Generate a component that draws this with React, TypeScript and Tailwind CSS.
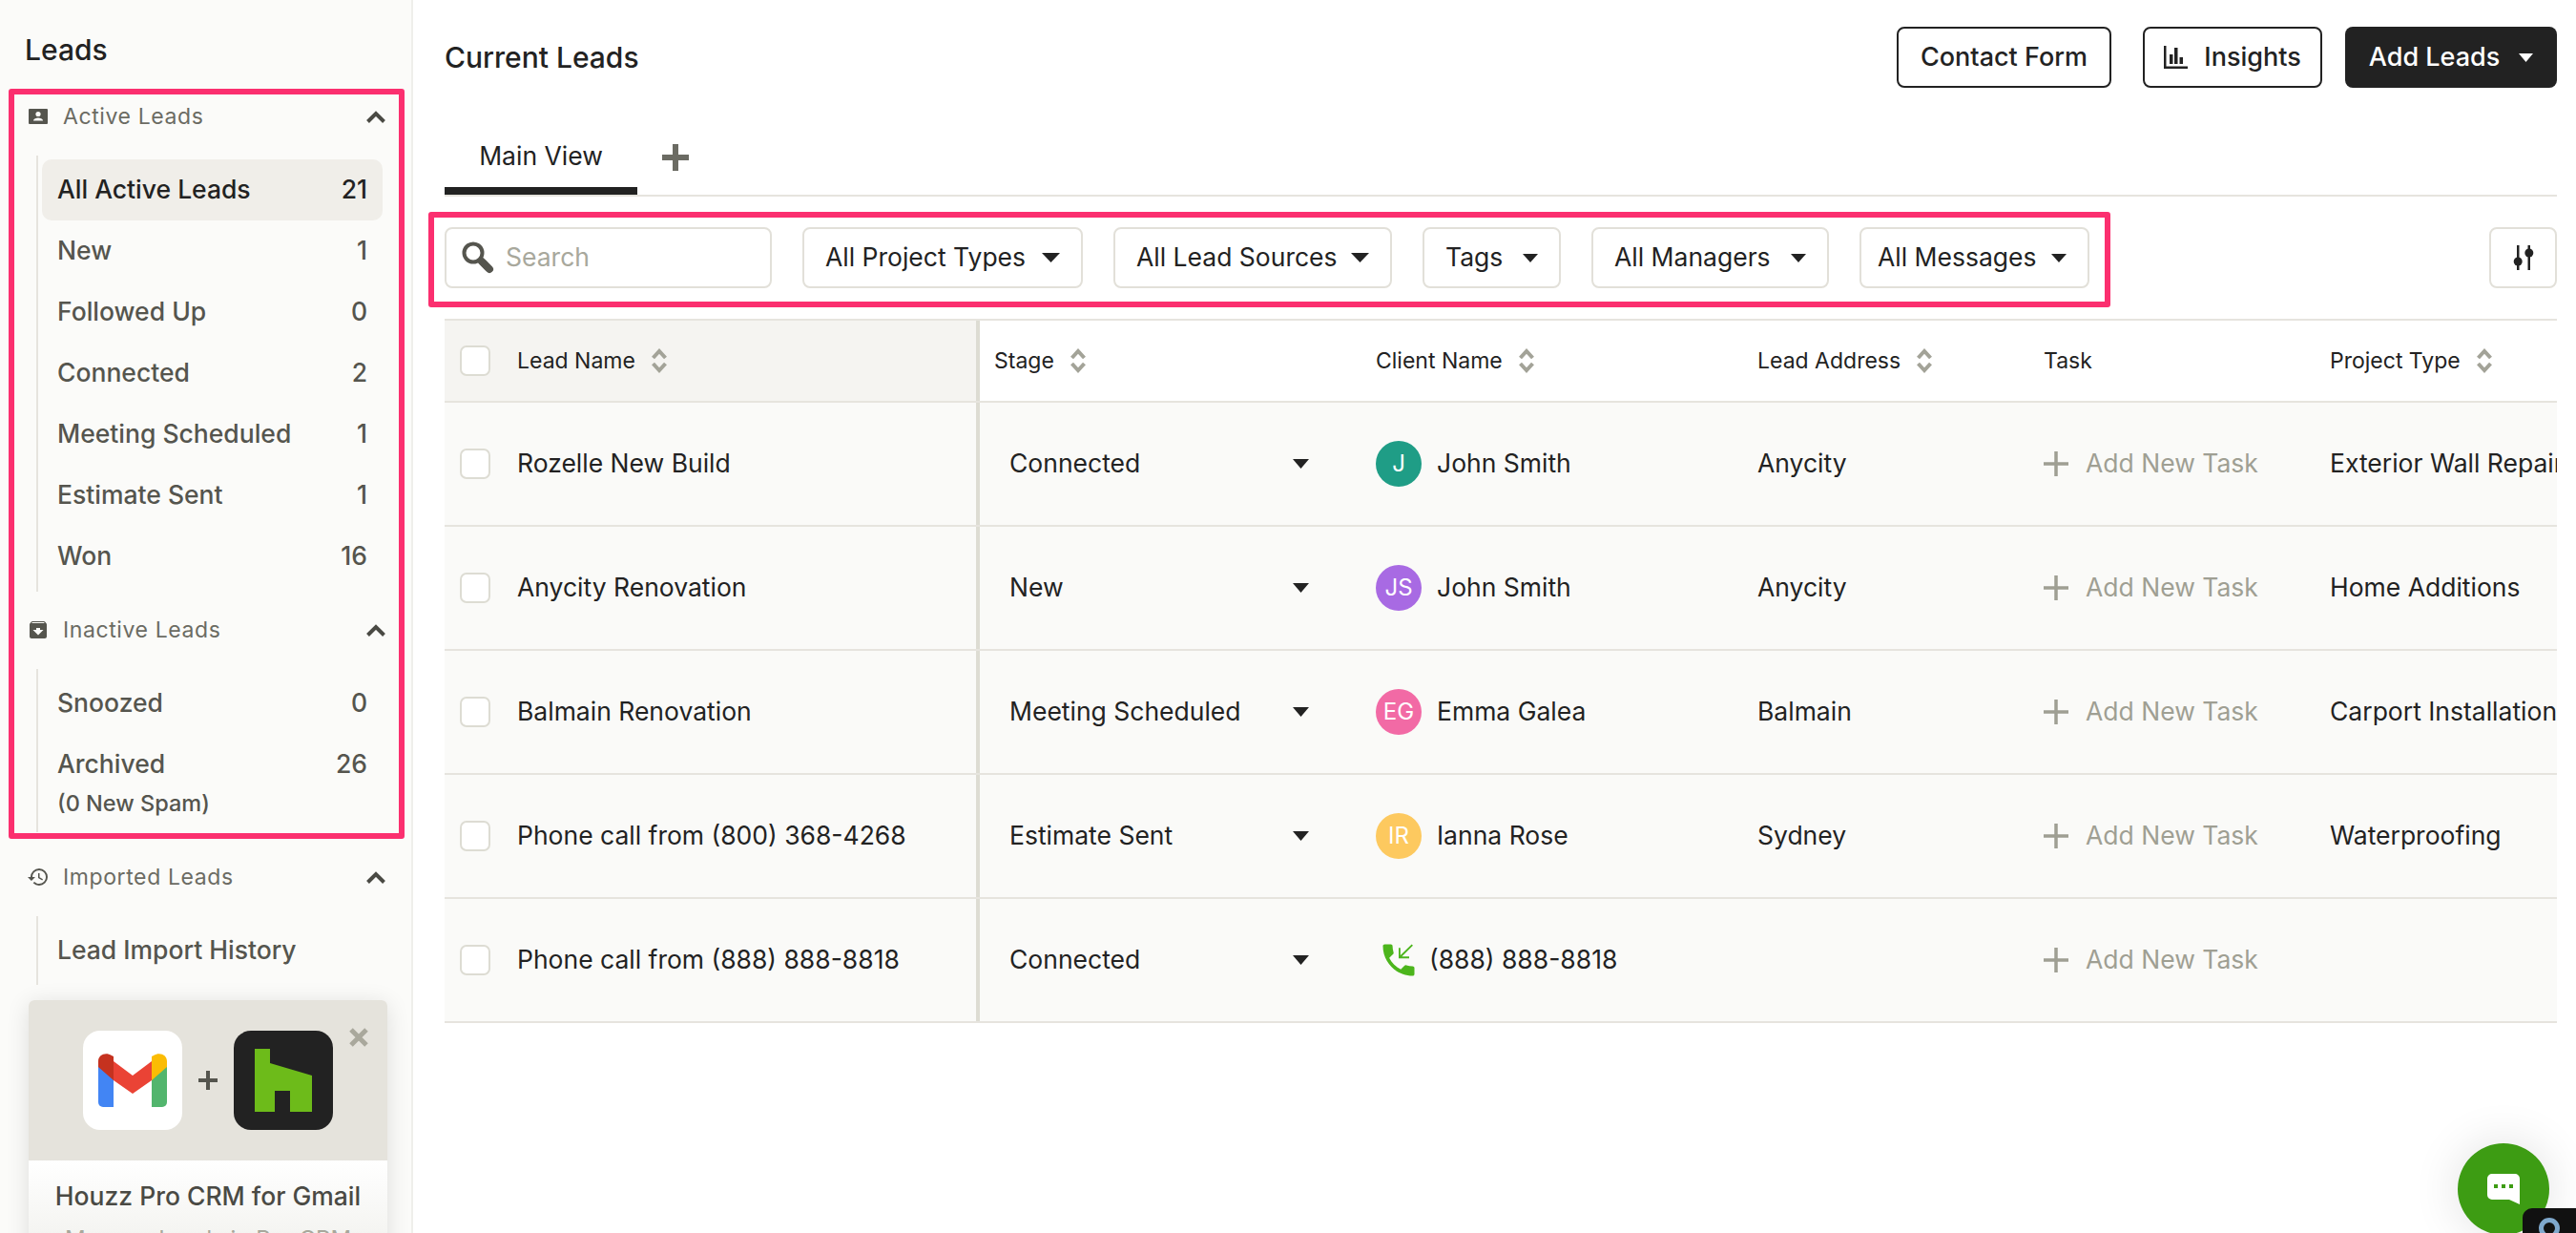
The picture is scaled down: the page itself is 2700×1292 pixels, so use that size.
import { MdArchive, MdHistory, MdPhoneCallback } from "react-icons/md";

const font = "[font-family:Inter,'Liberation_Sans',sans-serif]";

const activeItems = [
  { label: "All Active Leads", count: 21, selected: true },
  { label: "New", count: 1 },
  { label: "Followed Up", count: 0 },
  { label: "Connected", count: 2 },
  { label: "Meeting Scheduled", count: 1 },
  { label: "Estimate Sent", count: 1 },
  { label: "Won", count: 16 },
];

const rows = [
  { name: "Rozelle New Build", stage: "Connected", initials: "J", color: "bg-[#1f9d86]", client: "John Smith", address: "Anycity", type: "Exterior Wall Repairs" },
  { name: "Anycity Renovation", stage: "New", initials: "JS", color: "bg-[#a86ae3]", client: "John Smith", address: "Anycity", type: "Home Additions" },
  { name: "Balmain Renovation", stage: "Meeting Scheduled", initials: "EG", color: "bg-[#f26aa5]", client: "Emma Galea", address: "Balmain", type: "Carport Installation" },
  { name: "Phone call from (800) 368-4268", stage: "Estimate Sent", initials: "IR", color: "bg-[#fdc95f]", client: "Ianna Rose", address: "Sydney", type: "Waterproofing" },
  { name: "Phone call from (888) 888-8818", stage: "Connected", initials: "", color: "", client: "(888) 888-8818", address: "", type: "" },
];

function Caret({ className = "" }: { className?: string }) {
  return (
    <svg viewBox="0 0 18 10" preserveAspectRatio="none" className={`shrink-0 ${className}`}>
      <path d="M0 0h18L9 10z" fill="currentColor" />
    </svg>
  );
}

function SortIcon() {
  return (
    <svg width="18" height="28" viewBox="0 0 18 28" className="text-[#a3a398]" fill="none" stroke="currentColor" strokeWidth="4">
      <path d="M2.500 11 9 4l6.500 7M2.500 17 9 24l6.500-7" />
    </svg>
  );
}

function SectionHeader({ icon, title }: { icon: React.ReactNode; title: string }) {
  return (
    <div className="flex h-[40px] items-center pl-[30px] pr-[27px]">
      <span className="flex w-[36px] text-[#55554e]">{icon}</span>
      <span className="flex-1 text-[23px] tracking-[0.6px] text-[#6b6b63]">{title}</span>
      <svg width="20" height="13" viewBox="0 0 20 13" fill="none" stroke="#4a4a44" strokeWidth="4">
        <path d="M1.500 11.500 10 3l8.500 8.500" />
      </svg>
    </div>
  );
}

function NavItem({ label, count, selected }: { label: string; count?: number; selected?: boolean }) {
  return (
    <div
      className={`flex h-[64px] items-center justify-between rounded-[10px] pl-[16px] pr-[16px] text-[26.5px] font-medium ${
        selected ? "bg-[#f0eee9] text-[#222]" : "text-[#55554e]"
      }`}
    >
      <span>{label}</span>
      <span>{count}</span>
    </div>
  );
}

function Sidebar() {
  return (
    <aside className="flex h-full w-[433px] shrink-0 flex-col overflow-hidden border-r-2 border-[#efefeb] bg-[#fbfbf9]">
      <h2 className="pl-[26px] pt-[32px] text-[30px] font-medium leading-[40px] text-[#222]">Leads</h2>
      <div className="mt-[30px]">
        <SectionHeader
          title="Active Leads"
          icon={
            <svg width="20" height="16" viewBox="0 0 20 16">
              <path fill="#55554e" d="M1 0h18a1 1 0 0 1 1 1v14a1 1 0 0 1-1 1H1a1 1 0 0 1-1-1V1a1 1 0 0 1 1-1z" />
              <circle cx="10" cy="5.500" r="2.600" fill="#fbfbf9" />
              <path fill="#fbfbf9" d="M5 12.500c0-2 3-3 5-3s5 1 5 3z" />
            </svg>
          }
        />
        <div className="ml-[38px] mr-[30px] mt-[21px] border-l-2 border-[#e6e4de] pb-[5px] pl-[4px] pt-[4px]">
          {activeItems.map((item) => (
            <NavItem key={item.label} {...item} />
          ))}
        </div>
      </div>
      <div className="mt-[20px]">
        <SectionHeader title="Inactive Leads" icon={<MdArchive size={24} className="-ml-[2px]" />} />
        <div className="ml-[38px] mr-[30px] mt-[21px] border-l-2 border-[#e6e4de] pb-[18px] pl-[4px] pt-[4px]">
          <NavItem label="Snoozed" count={0} />
          <NavItem label="Archived" count={26} />
          <div className="-mt-[3px] pl-[16px] text-[23.5px] font-medium leading-[24px] text-[#55554e]">(0 New Spam)</div>
        </div>
      </div>
      <div className="mt-[27px]">
        <SectionHeader title="Imported Leads" icon={<MdHistory size={24} className="-ml-[2px]" />} />
        <div className="ml-[38px] mr-[30px] mt-[21px] border-l-2 border-[#e6e4de] pl-[4px]">
          <div className="flex h-[72px] items-center pl-[16px] text-[26.5px] font-medium text-[#55554e]">Lead Import History</div>
        </div>
      </div>
      <div className="relative ml-[30px] mt-[16px] w-[376px] shrink-0 rounded-t-[6px] bg-white shadow-[0_4px_24px_rgba(0,0,0,0.12)]">
        <div className="flex h-[168px] items-center justify-center gap-[16px] rounded-t-[6px] bg-[#e5e3dc]">
          <div className="flex h-[104px] w-[104px] items-center justify-center rounded-[18px] bg-white">
            <svg width="72" height="56" viewBox="0 0 72 56">
              <path fill="#4285f4" d="M0 14h16v42H5a5 5 0 0 1-5-5z" />
              <path fill="#34a853" fillOpacity="0.85" d="M56 14h16v37a5 5 0 0 1-5 5H56z" />
              <path fill="#ea4335" d="M16 8 36 23 56 8v20L36 42 16 28z" />
              <path fill="#c5321f" d="M0 8c0-7 8-10 14-6l2 1v25L0 14z" />
              <path fill="#fbbc04" d="M72 8c0-7-8-10-14-6l-2 1v25l16-14z" />
            </svg>
          </div>
          <svg width="22" height="22" viewBox="0 0 22 22" className="text-[#55554e]">
            <path d="M11 1v20M1 11h20" stroke="currentColor" strokeWidth="4" />
          </svg>
          <div className="flex h-[104px] w-[104px] items-center justify-center rounded-[18px] bg-[#222]">
            <svg width="60" height="66" viewBox="0 0 60 66">
              <path fill="#6dbb1a" d="M0 0h16v15l44 13v38H37V44H21v22H0z" />
            </svg>
          </div>
        </div>
        <svg width="22" height="22" viewBox="0 0 22 22" className="absolute right-[19px] top-[28px] text-[#a9a89c]">
          <path d="M3 3l16 16M19 3 3 19" stroke="currentColor" strokeWidth="5" />
        </svg>
        <div className="bg-gradient-to-b from-white to-[#f1f1ed] pt-[20px] text-center">
          <div className="text-[26.5px] font-medium leading-[34px] text-[#4a4a44]">Houzz Pro CRM for Gmail</div>
          <div className="mt-[12px] text-[24px] leading-[34px] text-[#a8a89c]">Manage Leads in Pro CRM</div>
        </div>
      </div>
    </aside>
  );
}

function OutlineButton({ children, className = "" }: { children: React.ReactNode; className?: string }) {
  return (
    <button className={`flex h-[64px] items-center justify-center rounded-[8px] border-2 border-[#222] bg-white text-[27px] font-medium text-[#222] ${className}`}>
      {children}
    </button>
  );
}

function FilterSelect({ label, small, className = "" }: { label: string; small?: boolean; className?: string }) {
  return (
    <button className={`flex h-[64px] items-center justify-between rounded-[8px] border-2 border-[#e2e0d9] bg-white pr-[22px] text-[26.5px] text-[#222] ${className}`}>
      <span>{label}</span>
      <Caret className={small ? "h-[9px] w-[16px] text-[#222]" : "h-[10px] w-[19px] text-[#222]"} />
    </button>
  );
}

function Checkbox() {
  return <span className="block h-[32px] w-[32px] rounded-[7px] border-2 border-[#dddcd3] bg-white" />;
}

function HeaderCell({ label, sort = true, className = "" }: { label: string; sort?: boolean; className?: string }) {
  return (
    <div className={`flex items-center gap-[16px] text-[23px] text-[#222] ${className}`}>
      <span className="whitespace-nowrap">{label}</span>
      {sort && <SortIcon />}
    </div>
  );
}

function LeadsTable() {
  return (
    <div className="mt-[32px] w-[2214px] overflow-hidden border-t-2 border-[#e6e4de]">
      <div className="grid h-[86px] grid-cols-[561px_415px_400px_300px_300px_238px] border-b-2 border-[#e6e4de]">
        <div className="flex items-center gap-[28px] border-r-4 border-[#dddcd3] bg-[#f5f4f1] pl-[16px]">
          <Checkbox />
          <HeaderCell label="Lead Name" />
        </div>
        <HeaderCell label="Stage" className="pl-[15px]" />
        <HeaderCell label="Client Name" />
        <HeaderCell label="Lead Address" />
        <HeaderCell label="Task" sort={false} />
        <HeaderCell label="Project Type" />
      </div>
      {rows.map((row) => (
        <div key={row.name} className="grid h-[130px] grid-cols-[561px_415px_400px_300px_300px_238px] border-b-2 border-[#e6e4de] bg-[#fafaf8] text-[26.5px] text-[#222]">
          <div className="flex items-center gap-[28px] border-r-4 border-[#dddcd3] pl-[16px]">
            <Checkbox />
            <span className="whitespace-nowrap">{row.name}</span>
          </div>
          <div className="flex items-center justify-between pl-[31px] pr-[70px]">
            <span className="whitespace-nowrap">{row.stage}</span>
            <Caret className="h-[10px] w-[17px] text-[#222]" />
          </div>
          <div className="flex items-center">
            {row.initials ? (
              <>
                <span className={`flex h-[48px] w-[48px] items-center justify-center rounded-full text-[24px] text-white ${row.color}`}>
                  {row.initials}
                </span>
                <span className="ml-[16px] whitespace-nowrap">{row.client}</span>
              </>
            ) : (
              <>
                <MdPhoneCallback size={44} className="ml-[2px] text-[#4cb51c]" />
                <span className="ml-[10px] whitespace-nowrap">{row.client}</span>
              </>
            )}
          </div>
          <div className="flex items-center">{row.address}</div>
          <div className="flex items-center text-[#9f9f93]">
            <svg width="26" height="26" viewBox="0 0 26 26" className="mr-[18px]">
              <path d="M13 0v26M0 13h26" stroke="currentColor" strokeWidth="3.500" />
            </svg>
            <span className="whitespace-nowrap">Add New Task</span>
          </div>
          <div className="flex items-center overflow-hidden whitespace-nowrap">{row.type}</div>
        </div>
      ))}
    </div>
  );
}

function Main() {
  return (
    <main className="flex h-full min-w-0 flex-1 flex-col bg-white pl-[33px] pr-[20px]">
      <div className="flex items-start justify-between pt-[28px]">
        <h1 className="pt-[10px] text-[30px] font-medium leading-[44px] text-[#222]">Current Leads</h1>
        <div className="flex">
          <OutlineButton className="w-[225px]">Contact Form</OutlineButton>
          <OutlineButton className="ml-[33px] w-[188px] gap-[17px]">
            <svg width="25" height="24" viewBox="0 0 25 24" fill="#222">
              <path d="M0 0h2.500v21.500H25V24H0zM6 9h3.500v10H6zM11 2h3.500v17H11zM16.500 12H20v7h-3.500z" />
            </svg>
            Insights
          </OutlineButton>
          <button className="ml-[24px] flex h-[64px] w-[222px] items-center justify-center gap-[20px] rounded-[8px] bg-[#222] text-[27px] font-medium text-white">
            Add Leads
            <Caret className="h-[9px] w-[15px] text-white" />
          </button>
        </div>
      </div>
      <div className="mt-[50px] flex h-[64px] items-end border-b-2 border-[#e6e4de]">
        <div className="flex h-[72px] w-[202px] items-center justify-center border-b-8 border-[#222] text-[26.5px] text-[#222]">Main View</div>
        <svg width="30" height="30" viewBox="0 0 30 30" className="mb-[24px] ml-[25px] text-[#6b6b63]">
          <path d="M15 1v28M1 15h28" stroke="currentColor" strokeWidth="6" />
        </svg>
      </div>
      <div className="mt-[32px] flex items-center justify-between">
        <div className="flex gap-[32px]">
          <div className="flex h-[64px] w-[343px] items-center rounded-[8px] border-2 border-[#e2e0d9] bg-white pl-[16px] text-[26.5px] text-[#a8a89c]">
            <svg width="34" height="34" viewBox="0 0 34 34" className="mr-[12px]" fill="none">
              <circle cx="12" cy="12" r="9.500" stroke="#55554e" strokeWidth="4" />
              <path d="M21 21l8 8" stroke="#55554e" strokeWidth="8" strokeLinecap="round" />
            </svg>
            Search
          </div>
          <FilterSelect label="All Project Types" className="w-[294px] pl-[22px]" />
          <FilterSelect label="All Lead Sources" className="w-[292px] pl-[22px]" />
          <FilterSelect label="Tags" small className="w-[145px] pl-[22px]" />
          <FilterSelect label="All Managers" small className="w-[249px] pl-[22px]" />
          <FilterSelect label="All Messages" small className="w-[241px] pl-[17px]" />
        </div>
        <button className="flex h-[64px] w-[71px] items-center justify-center rounded-[8px] border-2 border-[#e2e0d9] bg-white">
          <svg width="24" height="26" viewBox="0 0 24 26" fill="#222">
            <path d="M5 0h2.500v26H5zM16.500 0H19v26h-2.500z" />
            <circle cx="6.200" cy="17" r="4.500" />
            <circle cx="17.800" cy="8" r="4.500" />
          </svg>
        </button>
      </div>
      <LeadsTable />
    </main>
  );
}

export default function App() {
  return (
    <div className={`relative flex h-[1292px] w-[2700px] overflow-hidden bg-white ${font}`}>
      <Sidebar />
      <Main />
      {/* annotation boxes from the screenshot */}
      <div className="pointer-events-none absolute left-[9px] top-[93px] h-[786px] w-[415px] rounded-[3px] border-[6px] border-[#fb2f6f]" />
      <div className="pointer-events-none absolute left-[449px] top-[222px] h-[100px] w-[1763px] rounded-[3px] border-[6px] border-[#fb2f6f]" />
      <div className="absolute left-[2576px] top-[1198px] flex h-[96px] w-[96px] items-center justify-center rounded-full bg-[#3d9c13] shadow-[0_0_50px_rgba(0,0,0,0.12)]">
        <svg width="34" height="32" viewBox="0 0 34 32">
          <path fill="#fff" d="M5 0h24a5 5 0 0 1 5 5v27l-11-5H5a5 5 0 0 1-5-5V5a5 5 0 0 1 5-5z" />
          <path fill="#3d9c13" d="M7 11h4v4H7zM15 11h4v4h-4zM23 11h4v4h-4z" />
        </svg>
      </div>
      <div className="absolute left-[2644px] top-[1266px] flex h-[26px] w-[56px] justify-center overflow-hidden rounded-tl-[10px] bg-[#111]">
        <span className="mt-[10px] block h-[22px] w-[22px] rounded-full border-[5px] border-[#7fa8cc]" />
      </div>
    </div>
  );
}
